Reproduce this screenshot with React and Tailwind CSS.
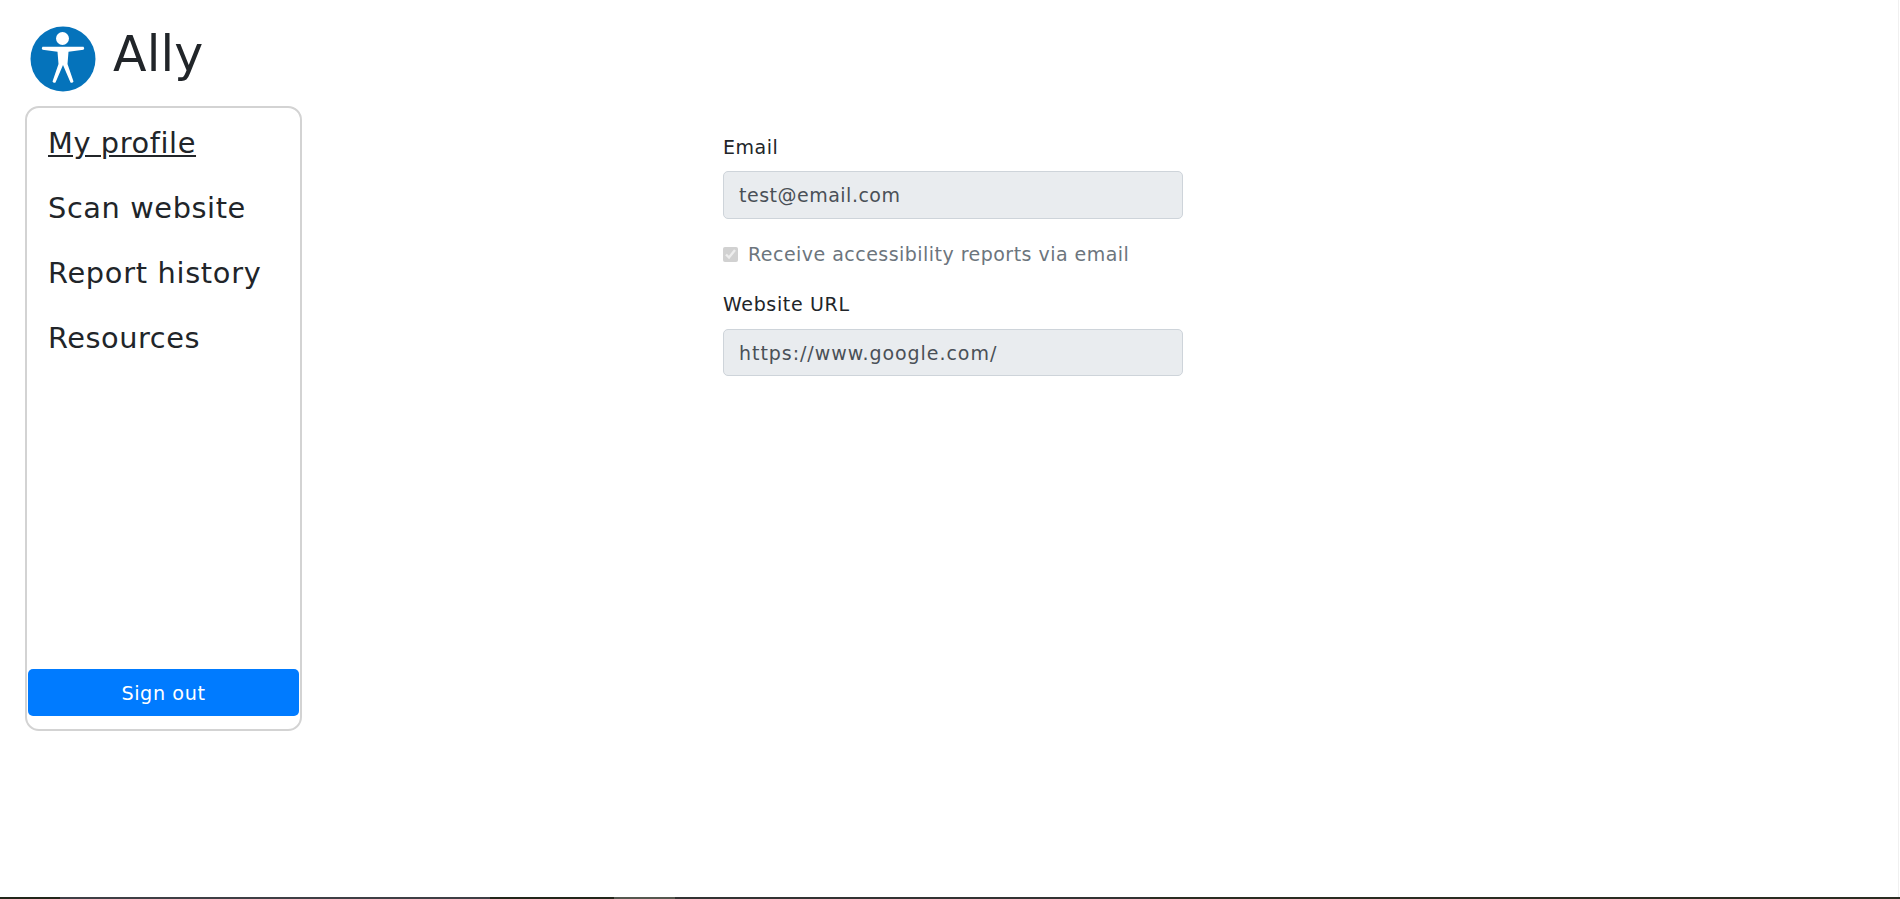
const navItems = [
  { label: "My profile", tracking: "tracking-[0.6px]" },
  { label: "Scan website", tracking: "tracking-[0.6px]" },
  { label: "Report history", tracking: "tracking-[0.7px]" },
  { label: "Resources", tracking: "tracking-[0.55px]" },
];

function AllyLogo() {
  return (
    <svg viewBox="0 0 66 66" className="w-[66px] h-[66px] shrink-0">
      <circle cx="33" cy="33" r="32.5" fill="#0573bb" />
      <circle cx="32.5" cy="12.5" r="6.5" fill="#fff" />
      <path
        d="M12.5 20.8 L53.5 20.8 Q55 22.3 53.5 23.8 L38.5 25.8 L37.5 38 L43.5 55.5 Q42.5 57.5 40.5 56.5 L33 39 L25.5 56.5 Q23.5 57.5 22.5 55.5 L28.5 38 L27.5 25.8 L12.5 23.8 Q11 22.3 12.5 20.8 Z"
        fill="#fff"
      />
    </svg>
  );
}

function Field({ label, value, labelTracking, valueTracking, height }) {
  return (
    <div>
      <label className={`block text-[19px] leading-[29px] text-[#212529] ${labelTracking}`}>{label}</label>
      <input
        disabled
        value={value}
        className={`mt-[9px] block w-full px-[15px] bg-[#e9ecef] border border-[#ced4da] rounded-[5px] text-[19px] text-[#495057] font-['DejaVu_Sans',sans-serif] ${height} ${valueTracking}`}
      />
    </div>
  );
}

export default function App() {
  return (
    <div className="relative h-[899px] overflow-hidden bg-white font-['DejaVu_Sans',sans-serif] text-[#212529]">
      <header className="flex items-start gap-[17px] pl-[30px] pt-[26px] h-[106px]">
        <AllyLogo />
        <h1 className="text-[49px] leading-[58px] font-normal tracking-[0.2px]">Ally</h1>
      </header>
      <div className="flex">
        <aside className="ml-[25px] w-[277px] h-[625px] flex flex-col border-2 border-[#d3d3d3] rounded-[14px] px-[1px] pb-[13px]">
          <nav className="flex-1 flex flex-col pl-[20px] pt-[3px]">
            {navItems.map((item, i) => (
              <a
                key={item.label}
                href="#"
                className={`block text-[28.8px] leading-[65px] text-[#212529] ${item.tracking} ${i === 0 ? "underline" : ""}`}
              >
                {item.label}
              </a>
            ))}
          </nav>
          <button className="h-[47px] w-full pt-[3px] bg-[#007bff] rounded-[5px] text-white text-[19.2px] tracking-[0.6px]">
            Sign out
          </button>
        </aside>
        <main className="ml-[421px] w-[460px] pt-[27px]">
          <Field
            label="Email"
            value="test@email.com"
            labelTracking="tracking-[0.5px]"
            valueTracking="tracking-[0.5px]"
            height="h-[48px]"
          />
          <label className="flex items-center mt-[21px] h-[29px] text-[19px] text-[#6c757d] tracking-[0.47px]">
            <input type="checkbox" checked disabled readOnly className="w-[15px] h-[15px] mr-[10px]" />
            Receive accessibility reports via email
          </label>
          <div className="mt-[21px]">
            <Field
              label="Website URL"
              value="https://www.google.com/"
              labelTracking="tracking-[0.65px]"
              valueTracking="tracking-[0.95px]"
              height="h-[47px] mt-[10px]"
            />
          </div>
        </main>
      </div>
      <div className="absolute right-[1px] top-0 bottom-0 w-[1px] bg-[#f0f0f0]" />
      <div className="absolute left-0 right-0 bottom-0 h-[2px] flex">
        <div className="w-[60px] bg-[#22261a]" />
        <div className="w-[430px] bg-[#3f3f45]" />
        <div className="w-[124px] bg-[#22261a]" />
        <div className="w-[61px] bg-[#55584f]" />
        <div className="w-[475px] bg-[#333333]" />
        <div className="flex-1 bg-[#2a2c22]" />
      </div>
    </div>
  );
}
